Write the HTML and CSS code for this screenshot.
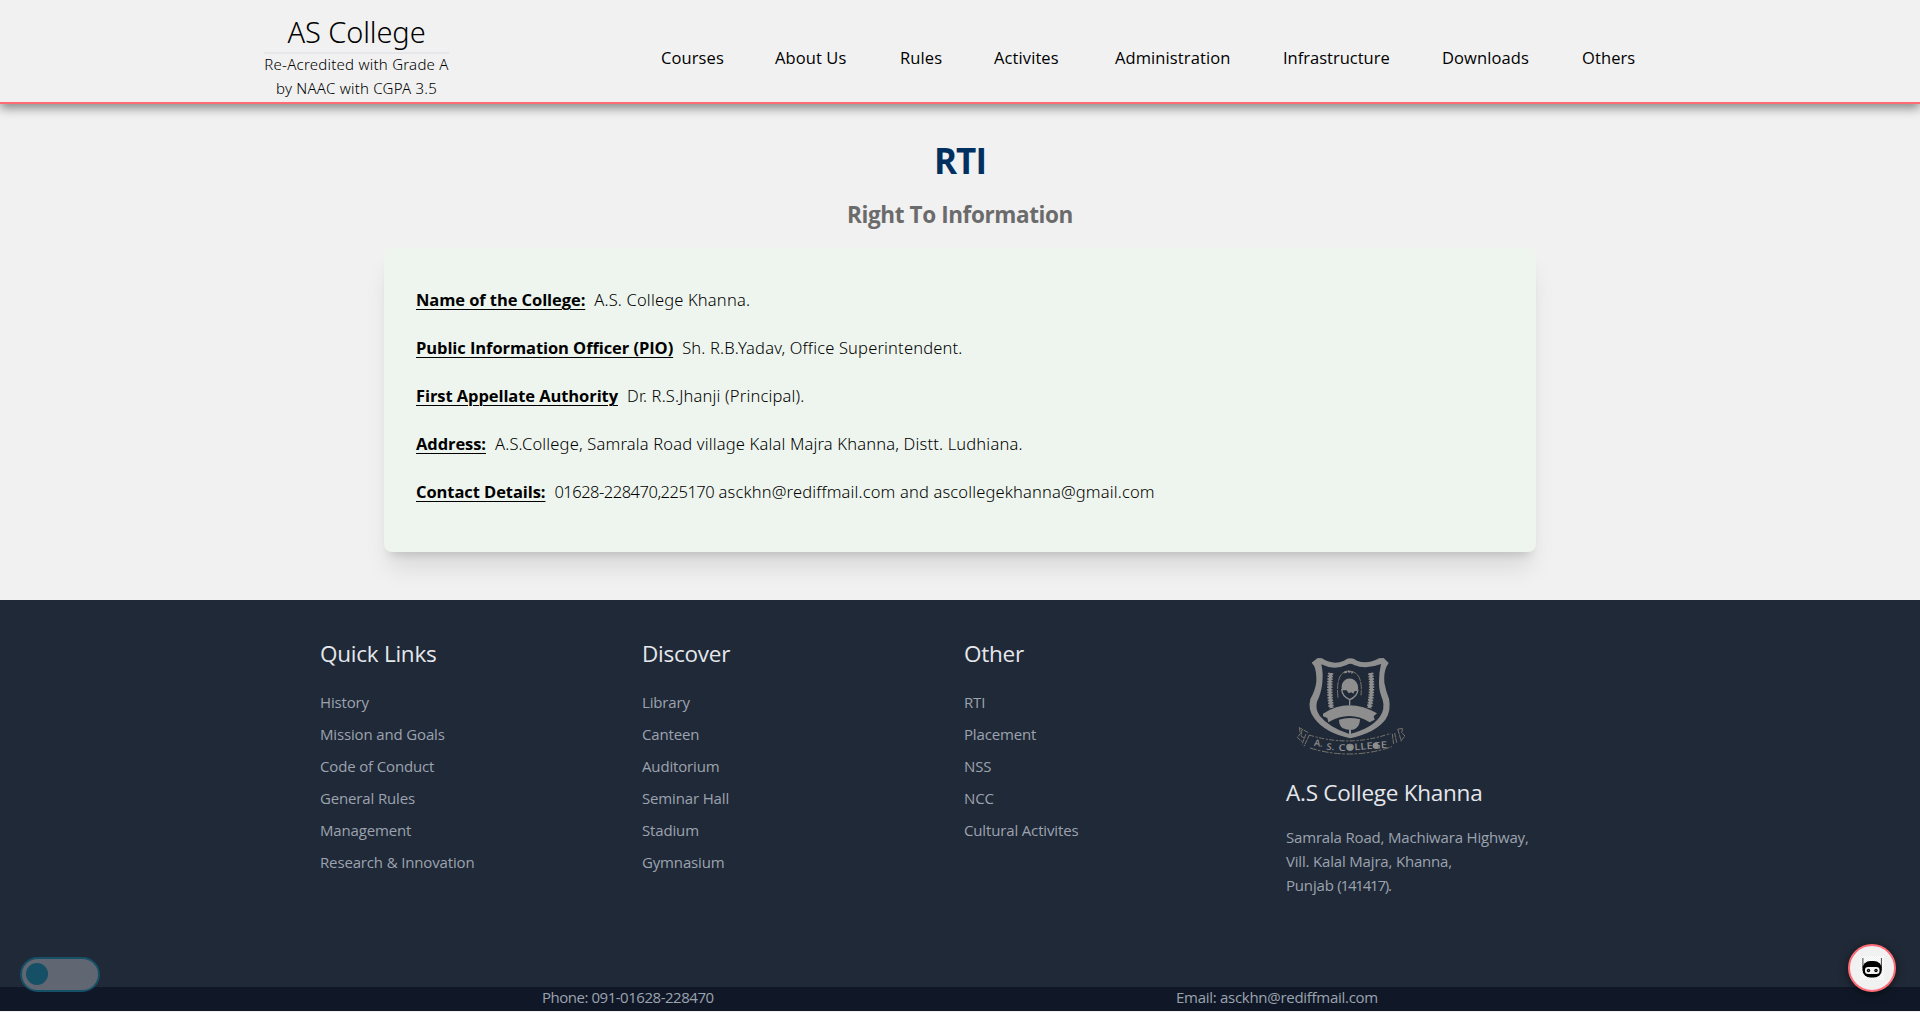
FILE: index.html
```
<!DOCTYPE html>
<html lang="en">
<head>
<meta charset="utf-8">
<title>AS College - RTI</title>
<link rel="stylesheet" href="styles.css">
</head>
<body>
<header class="header">
  <div class="brand">
    <div class="brand-name">AS College</div>
    <div class="brand-note">Re-Acredited with Grade A<br>by NAAC with CGPA 3.5</div>
  </div>
  <nav class="nav">
    <a>Courses</a><a>About Us</a><a>Rules</a><a>Activites</a><a>Administration</a><a class="tight">Infrastructure</a><a>Downloads</a><a>Others</a>
  </nav>
</header>

<main class="main">
  <h1 class="title">RTI</h1>
  <h2 class="subtitle">Right To Information</h2>
  <section class="card">
    <p class="row"><b>Name of the College:</b><span>A.S. College Khanna.</span></p>
    <p class="row"><b>Public Information Officer (PIO)</b><span>Sh. R.B.Yadav, Office Superintendent.</span></p>
    <p class="row"><b>First Appellate Authority</b><span>Dr. R.S.Jhanji (Principal).</span></p>
    <p class="row"><b>Address:</b><span>A.S.College, Samrala Road village Kalal Majra Khanna, Distt. Ludhiana.</span></p>
    <p class="row"><b>Contact Details:</b><span class="contact"><span class="digits">01628-228470,225170</span> asckhn@rediffmail.com and ascollegekhanna@gmail.com</span></p>
  </section>
</main>

<footer class="footer">
  <div class="columns">
    <div>
      <h3>Quick Links</h3>
      <ul><li>History</li><li>Mission and Goals</li><li>Code of Conduct</li><li>General Rules</li><li>Management</li><li>Research &amp; Innovation</li></ul>
    </div>
    <div>
      <h3>Discover</h3>
      <ul><li>Library</li><li>Canteen</li><li>Auditorium</li><li>Seminar Hall</li><li>Stadium</li><li>Gymnasium</li></ul>
    </div>
    <div>
      <h3>Other</h3>
      <ul><li>RTI</li><li>Placement</li><li>NSS</li><li>NCC</li><li>Cultural Activites</li></ul>
    </div>
    <div>
      <svg class="crest" width="132" height="123" viewBox="0 0 132 123">
        <g transform="translate(-16 2) scale(.33333)" fill="#8e8e8e">
          <path fill-rule="evenodd" d="M125 68 L143 54 L156 55 Q190 77 222 62 Q241 48 261 62 Q292 75 327 55 L341 54 L356 69 L349 81 Q341 99 343 128 Q348 154 357 176 Q364 210 347 238 Q318 278 241 295 Q165 278 134 236 Q112 210 121 177 Q136 151 139 126 Q140 96 133 79 Z M154 73 Q160 96 157 128 Q154 158 141 185 Q135 207 149 227 Q177 262 238 282 Q302 267 329 231 Q346 207 338 180 Q326 151 327 127 Q327 97 333 72 Q288 90 252 75 Q241 68 230 75 Q191 92 154 73 Z"/>
          <path d="M159 221 Q236 171 321 220 L311 229 L314 239 L299 247 Q239 209 175 247 L172 234 L159 229 Z"/>
          <path d="M207 239 Q238 229 270 238 Q270 259 255 267 Q239 273 219 265 Q207 257 207 239 Z M237 266 h6 v24 h-6 Z"/>
          <path d="M216 151 Q211 129 226 119 Q239 112 253 120 Q268 132 263 153 L254 153 L250 161 L244 157 L236 160 L230 151 Z"/>
          <path d="M215 147 Q216 169 239 179 Q261 171 264 149 M239 178 V196" fill="none" stroke="#8e8e8e" stroke-width="4"/>
          <path d="M204 173 Q196 92 238 93 Q280 96 273 166" fill="none" stroke="#77736b" stroke-width="3" stroke-dasharray="22 3"/>
          <path d="M223 98 Q237 91 248 99" fill="none" stroke="#8e8e8e" stroke-width="6" stroke-dasharray="8 3"/>
          <path d="M182 99 Q176 148 184 204 M302 99 Q309 148 298 204" fill="none" stroke="#8e8e8e" stroke-width="16" stroke-dasharray="5 3"/>
          <path d="M182 99 Q176 148 184 204 M302 99 Q309 148 298 204" fill="none" stroke="#8e8e8e" stroke-width="9"/>
          <g fill="none" stroke="#77736b" stroke-width="3">
            <path d="M117 285 Q240 323 362 280" stroke-dasharray="15 5 7 4"/>
            <path d="M120 324 Q242 362 366 320" stroke-dasharray="20 4 8 5"/>
            <path d="M118 285 L102 319 M108 282 L96 313 M88 262 L91 281 L82 292 L96 305 M88 263 L115 278 M96 270 L93 288 L104 295" stroke-dasharray="14 2"/>
            <path d="M367 282 L371 314 M374 279 L380 308 M384 270 L394 304 M382 268 L398 265 L395 278 L405 288 L392 303" stroke-dasharray="14 2"/>
          </g>
          <g class="crest-text">
            <text x="131" y="317" transform="rotate(8 131 317)">A.</text>
            <text x="169" y="329" transform="rotate(5 169 329)">S.</text>
            <text x="206" y="334" textLength="146" lengthAdjust="spacingAndGlyphs" transform="rotate(-4 206 334)">COLLEGE</text>
          </g>
          <circle cx="240" cy="323" r="9"/><circle cx="317" cy="317" r="9"/>
        </g>
      </svg>
      <h3>A.S College Khanna</h3>
      <address>Samrala Road, Machiwara Highway,<br>Vill. Kalal Majra, Khanna,<br>Punjab <span class="pin">(141417).</span></address>
    </div>
  </div>
  <div class="bar"><span class="phone">Phone: 091-01628-228470</span><span class="email">Email: asckhn@rediffmail.com</span></div>
</footer>

<div class="toggle"><span class="knob"></span></div>
<div class="bot">
  <svg width="24" height="24" viewBox="0 0 24 24">
    <path d="M2.900 2v10M21.400 2v10" stroke="#444" stroke-width="1"/>
    <rect x="2.400" y="5" width="19.500" height="16.500" rx="8"/>
    <rect x="5" y="11" width="14.500" height="7" rx="3" fill="#f4f4f4"/>
    <circle cx="8.500" cy="14.500" r="1.700"/><circle cx="16" cy="14.500" r="1.700"/>
    <circle cx="8.500" cy="14.500" r=".5" fill="#aaa"/><circle cx="16" cy="14.500" r=".5" fill="#aaa"/>
  </svg>
</div>
</body>
</html>
```
FILE: styles.css
```
* { box-sizing: border-box; margin: 0; padding: 0; }
body {
  height: 1012px;
  overflow: hidden;
  background: #f1f1f1;
  color: #000;
  font-family: "Open Sans", "Noto Sans", sans-serif;
  font-size: 15px;
  line-height: 24px;
  white-space: nowrap;
}
.header {
  position: relative;
  display: flex;
  height: 104px;
  padding: 12px 0 0 264px;
  border-bottom: 2px solid #ff6b74;
  box-shadow: 0 4px 10px rgba(0, 0, 0, .45);
}
.brand { width: 185px; text-align: center; font-family: "Noto Sans", sans-serif; font-weight: 300; }
.brand-name {
  height: 42px;
  border-bottom: 2px solid #e5e7eb;
  font-size: 29px;
  line-height: 39px;
  letter-spacing: -.1px;
}
.brand-note { margin-top: -2px; letter-spacing: .24px; }
.nav {
  display: grid;
  grid-template-columns: 61px 72px 41px 68px 115px 106px 87px 52px;
  gap: 53px;
  margin: 34px 0 0 212px;
  font-size: 16.5px;
  letter-spacing: .1px;
}
.nav .tight { letter-spacing: 0; }
.main { height: 496px; padding-top: 33px; }
.title {
  text-align: center;
  font-size: 35px;
  line-height: 48px;
  letter-spacing: -1px;
  color: #003060;
}
.subtitle {
  margin-top: 14px;
  text-align: center;
  font-size: 22.5px;
  line-height: 32px;
  letter-spacing: -.4px;
  color: #6b6b6b;
}
.card {
  display: flex;
  flex-direction: column;
  gap: 24px;
  width: 1152px;
  height: 304px;
  margin: 17px auto 0;
  padding: 40px 32px;
  border-radius: 8px;
  background: #eef5ee;
  box-shadow: 0 20px 25px -5px rgba(0, 0, 0, .1), 0 8px 10px -6px rgba(0, 0, 0, .15);
}
.row { display: flex; gap: 9px; font-size: 16.5px; }
.row b {
  letter-spacing: -.08px;
  text-decoration: underline;
  text-decoration-thickness: 1px;
  text-underline-offset: 3px;
}
.row span { font-family: "Noto Sans", sans-serif; font-weight: 300; letter-spacing: .17px; }
.row .contact { letter-spacing: .15px; }
.row .digits { letter-spacing: -.5px; }
.footer {
  display: flex;
  flex-direction: column;
  height: 411px;
  background: #202937;
  color: #9ca3af;
}
.columns {
  display: grid;
  grid-template-columns: repeat(4, 322px);
  flex: 1;
  padding: 38px 0 0 320px;
}
.footer h3 {
  margin-bottom: 16px;
  font-size: 22.5px;
  font-weight: 500;
  line-height: 32px;
  letter-spacing: -.25px;
  color: #e5e7eb;
}
.footer ul { list-style: none; line-height: 32px; letter-spacing: -.15px; }
.crest { display: block; margin-bottom: 16px; }
.crest-text { font: 600 28px "Open Sans", sans-serif; }
.footer address { font-style: normal; letter-spacing: -.18px; }
.footer .pin { letter-spacing: -1.2px; }
.bar {
  display: grid;
  grid-template-columns: 634px auto;
  height: 24px;
  padding-left: 542px;
  line-height: 21px;
  background: #101827;
}
.phone { letter-spacing: -.47px; }
.email { letter-spacing: -.28px; }
.toggle {
  position: absolute;
  left: 20px;
  top: 957px;
  width: 80px;
  height: 35px;
  padding: 4px;
  border: 2px solid #155066;
  border-radius: 18px;
  background: #616772;
}
.knob { display: block; width: 22px; height: 22px; border-radius: 50%; background: #155066; }
.bot {
  position: absolute;
  left: 1848px;
  top: 944px;
  display: flex;
  align-items: center;
  justify-content: center;
  width: 48px;
  height: 48px;
  border: 2px solid #ff6b74;
  border-radius: 50%;
  background: #f1f1f1;
  box-shadow: 0 2px 10px rgba(0, 0, 0, .5);
}
.bot svg { background: repeating-conic-gradient(#fff 0 25%, #efefef 0 50%) 0 0 / 2px 2px; }
```
